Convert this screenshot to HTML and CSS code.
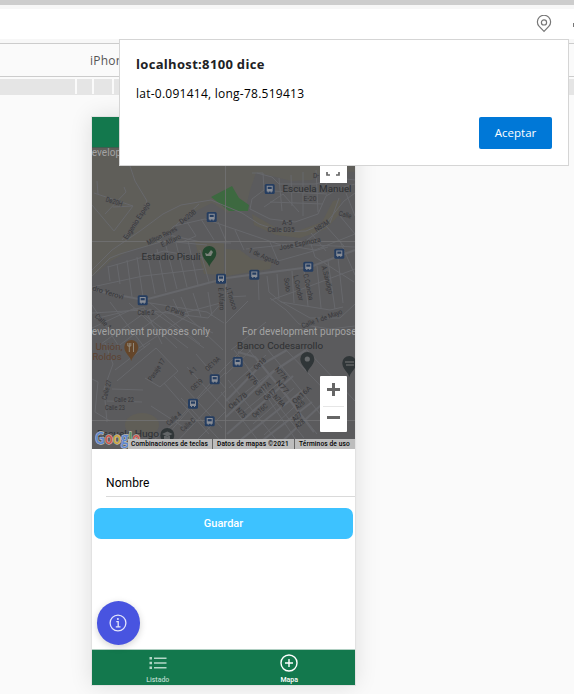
FILE: index.html
```html
<!DOCTYPE html>
<html lang="es">
<head>
<meta charset="utf-8">
<title>Mapa</title>
<link rel="stylesheet" href="styles.css">
</head>
<body>
<div class="tabstrip"></div>
<div class="addressbar">
  <svg class="pin" viewBox="0 0 16 18" width="16" height="18"><path d="M8 16.3 3.2 11.4a6.6 6.6 0 1 1 9.6 0Z"/><circle cx="8" cy="7.4" r="2.6"/></svg>
  <span class="more"></span>
</div>
<div class="device-bar"><span>iPhone X</span></div>
<div class="ruler"><i></i><i></i><i></i></div>
<main class="phone">
  <header class="app-header"></header>
  <div class="map">
  <svg class="map-canvas" viewBox="92 148 263 301" width="263" height="301">
    <defs>
      <g id="bus"><rect x="-5" y="-5" width="10" height="10" rx="1.5" fill="#253d60"/><path d="M-3-3.2h6v5.6h-1v1h-1v-1h-2v1h-1v-1h-1z" fill="#8a8e96"/><path d="M-2-2.2h4v2.2h-4z" fill="#253d60"/></g>
      <g id="place"><path d="M0 13C-1 8-7 5-7-1a7 7 0 0 1 14 0C7 5 1 8 0 13Z"/></g>
    </defs>
    <rect x="92" y="148" width="263" height="301" fill="#5b5b5d"/>
    <path d="M92 148H355V172L322 171 312 180 291 181 272 176 256 173 250 190 247 203 228 213 212 203 190 214 172 228 160 241 150 246 130 250 111 261 92 277Z" fill="#5f5e59"/>
    <path d="M225 249 240 250 252 259 272 262 270 269 226 276ZM252 214 278 229 295 232 322 222 333 201 341 199 338 216 326 229 300 238 276 235 254 225ZM195 242 224 243 224 275 204 274Z" fill="#605e56"/>
    <ellipse cx="142" cy="425" rx="17" ry="12" fill="#605e57"/>
    <path d="M211 197 232 186 239 198 249 205 248 211 229 211Z" fill="#3d6940"/>
    <g class="roads">
      <path d="M130 166 135 181 147 201 139 218 122 240M92 205 114 231 133 206 94 193M97 181 98 194M124 187 126 192 105 214M113 207 133 206"/>
      <path d="M92 270 112 250 140 231 163 214 181 205 211 200 242 213 259 224 283 232 306 231 327 222 344 201 355 193"/>
      <path d="M160 240 174 226 205 219 237 230 278 244 315 250 355 234M175 226 199 204M187 222 196 236 182 242M201 219 214 240M218 222 226 241M235 230 244 250M169 235 201 242 231 243"/>
      <path d="M252 173 263 173 264 190 252 199 250 209 270 219 295 222 318 214 326 196 340 188 355 184M257 173 272 177 279 184 315 184 338 178 355 180M279 178 282 211M291 175 292 206M303 172 303 216M316 170 318 212M331 170 323 193M272 191 327 194M270 202 323 204M264 207 283 194 299 212M339 198 330 223 307 240M346 193 355 216M311 233 326 251M326 226 344 246M340 216 355 234"/>
      <path d="M92 276 110 258 120 254 164 241 207 245M108 266 110 281M117 264 120 284M127 260 132 297M137 257 143 297M147 253 155 294M157 249 166 292M166 246 177 289M176 243 187 287M188 241 198 285M200 250 209 282M108 267 164 251 203 258M92 287 143 276 204 269"/>
      <path class="avenue" d="M92 290 144 300 227 278 310 267 355 250"/>
      <path d="M92 313 143 310 208 318 224 300M144 302 207 312 224 323M94 319 144 307 162 344M92 328 135 308 188 348M101 344 150 309 204 348M117 347 166 311 213 333M139 348 187 316 223 350M92 305 120 348M110 302 145 348M129 303 177 348M150 303 200 344M173 299 180 314 224 302M208 292 212 316M181 297 189 316M193 293 201 317"/>
      <path d="M226 280 228 297 246 296M258 275 259 300M267 276 269 292 281 302 330 310 343 307M277 274 279 299M292 271 294 303M304 270 308 306M317 266 321 308M328 261 335 309M338 258 343 303M271 300 302 289 355 269M280 301 310 318 340 318 355 304M270 298 286 310 299 324 330 329 355 326M225 324 248 301M231 350 266 322M246 249 293 244 355 247M270 242 278 261 328 247M310 241 315 257 354 282M340 241 355 275"/>
      <path d="M92 379 98 382 95 412 110 421M105 343 113 364 104 389 107 422M115 370 150 343M117 381 156 348 178 371 160 387 145 378M112 389 143 390M107 401 142 402M144 448 177 421 222 370 247 345M156 448 200 397 226 372M171 448 226 390M189 448 226 411M174 376 222 428M164 383 209 434M187 367 226 410M196 354 226 389M151 406 188 430M181 398 227 448"/>
      <path class="avenue" d="M238 352 255 357 282 390 314 432M226 401 261 365 287 350M226 417 274 371 306 350M227 434 293 376M238 442 303 390M254 447 312 402M276 447 321 405"/>
      <path d="M226 374 251 350M229 388 266 355M234 401 274 370M243 412 286 377M253 424 294 388M264 435 304 398M234 350 304 438M249 350 317 434M268 350 330 426M286 350 340 406M304 347 355 401M221 392 260 443M228 380 278 442M247 367 296 440"/>
    </g>
    <path d="M92 241.5H355M92 420.5H355M225.5 148V449" stroke="#727273" stroke-width=".8"/>
    <g class="labels" id="labels"></g>
    <use href="#bus" x="211.7" y="217"/><use href="#bus" x="269.7" y="189"/><use href="#bus" x="142.7" y="300.3"/><use href="#bus" x="221" y="278.7"/><use href="#bus" x="254.3" y="274.7"/><use href="#bus" x="308.3" y="266.7"/><use href="#bus" x="339.3" y="253.7"/><use href="#bus" x="214.7" y="379.3"/><use href="#bus" x="193" y="403.7"/><use href="#bus" x="209.7" y="421.3"/><use href="#bus" x="237.7" y="362"/>
    <use href="#place" x="209.3" y="254" fill="#24482f"/><path d="M205 253l3 1 3-4 2 2-2 4h-5z" fill="#7b827b"/>
    <use href="#place" x="131.3" y="348" fill="#65462a"/><path d="M129.3 343v4M127.8 343v3h3v-3M129.3 346v6M133.5 343v9" stroke="#8f8678" fill="none"/>
    <use href="#place" x="307.3" y="360" fill="#303638"/><circle cx="307.3" cy="359" r="2.6" fill="#66696b"/>
    <use href="#place" x="349.3" y="364" fill="#303638"/><path d="M345 362h9M346 365h8" stroke="#777"/>
    <use href="#place" x="167.3" y="436" fill="#303638"/><path d="M162 434l5.300-2.500 5.300 2.500-5.300 2.500zM164 436v3h6v-3" fill="#626567"/>
    <g class="notice">
      <text x="86" y="155.500" textLength="124">development purposes only</text>
      <text x="86" y="334.500" textLength="124">development purposes only</text>
      <text x="242" y="334.500" textLength="141">For development purposes only</text>
    </g>
    <text class="google" x="95" y="443.500" textLength="45" lengthAdjust="spacingAndGlyphs"><tspan fill="#5c86cf">G</tspan><tspan fill="#d0564c">o</tspan><tspan fill="#cda63c">o</tspan><tspan fill="#5c86cf">g</tspan><tspan fill="#56955e">l</tspan><tspan fill="#d0564c">e</tspan></text>
  </svg>
  <div class="fullscreen"><svg width="14" height="14" viewBox="0 0 14 14"><path d="M1 4V1h3M10 1h3v3M13 10v3h-3M4 13H1v-3"/></svg></div>
  <div class="zoom"><span class="plus"></span><hr><span class="minus"></span></div>
  <div class="credits"><span>Combinaciones de teclas</span><span>Datos de mapas ©2021</span><span>Términos de uso</span></div>
  </div>
  <section class="content">
    <div class="field">Nombre</div>
    <div class="save">Guardar</div>
    <div class="fab"><svg viewBox="0 0 18 18" width="18" height="18"><circle cx="9" cy="9" r="7.900"/><path d="M7.300 7.600H9.200V12.700M6.800 12.800H11.500"/><circle class="dot" cx="8.900" cy="4.900" r="1"/></svg></div>
  </section>
  <nav class="tabs">
    <div class="tab muted"><svg viewBox="0 0 18 18" width="18" height="18"><path d="M5 4.200h12.500M5 9h12.500M5 13.800h12.500"/><path class="bullets" d="M.5 4.200h2.500M.5 9h2.500M.5 13.800h2.500"/></svg><span>Listado</span></div>
    <div class="tab"><svg viewBox="0 0 18 18" width="18" height="18"><circle cx="9" cy="9" r="8"/><path d="M9 5v8M5 9h8"/></svg><span>Mapa</span></div>
  </nav>
</main>
<div class="dialog">
  <h1>localhost:8100 dice</h1>
  <p>lat-0.091414, long-78.519413</p>
  <button>Aceptar</button>
</div>
<script src="map.js"></script>
</body>
</html>
```
FILE: styles.css
```css
* { box-sizing: border-box; }
body { margin: 0; width: 574px; height: 694px; overflow: hidden; position: relative; background: #fafafa; font-family: "Open Sans", "Noto Sans", sans-serif; }
.tabstrip { height: 9px; background: #f7f7f7; border-top: 5px solid #cdcdcd; }
.addressbar { height: 30px; background: #fff; display: flex; justify-content: flex-end; padding-top: 6px; gap: 21px; }
.pin { fill: none; stroke: #767676; stroke-width: 1.2; }
.more { width: 1px; height: 4px; margin-top: 8px; background: #777; }
.device-bar { height: 38px; border-top: 4px solid #f7f7f7; border-bottom: 1px solid #ccc; box-shadow: inset 0 1px #ccc; padding: 9px 0 0 90px; font-size: 12px; line-height: 18px; color: #555; letter-spacing: .2px; }
.ruler { height: 16px; margin-top: 2px; background: #e5e5e5; display: flex; padding-left: 75px; }
.ruler i { width: 2px; height: 15px; background: #fafafa; margin-right: 15px; }
.ruler i + i { margin-right: 18px; }
.phone { width: 263px; height: 568px; margin: 22px 0 0 92px; background: #fff; display: flex; flex-direction: column; box-shadow: 0 0 0 1px #e2e2e2, 0 0 22px rgba(0,0,0,.12); }
.app-header { height: 31px; background: #13784d; border-bottom: 1px solid #3f5d50; }
.map { height: 301px; position: relative; overflow: hidden; }
.map-canvas { display: block; }
.roads { fill: none; stroke: #67686c; stroke-width: 1; stroke-linejoin: round; }
.roads .avenue { stroke-width: 2.2; stroke: #66676b; }
.labels { font-family: Roboto, sans-serif; font-size: 7px; fill: #37373a; text-anchor: middle; stroke: #5b5b5d; stroke-width: .7px; paint-order: stroke; }
.labels .big { font-size: 9.5px; fill: #2e3032; }
.labels .food { font-size: 9px; fill: #5d4231; }
.notice { font-family: Roboto, sans-serif; font-size: 10px; fill: #a3a3a3; }
.google { font-family: "Open Sans", sans-serif; font-size: 16px; font-weight: 600; stroke: #bbb; stroke-width: 1.3px; paint-order: stroke; }
.fullscreen { position: absolute; left: 228px; top: 7px; width: 27px; height: 28px; background: #fff; padding: 7px 6px; }
.fullscreen svg { display: block; fill: none; stroke: #666; stroke-width: 1.7; }
.zoom { position: absolute; left: 228px; top: 228px; width: 27px; height: 56px; background: #fff; display: flex; flex-direction: column; align-items: center; justify-content: space-between; padding: 7px 3px 13px; border-radius: 1px; }
.plus, .minus { width: 13px; height: 3px; background: #666; }
.plus { height: 13px; background: linear-gradient(#666,#666) center/3px 13px no-repeat, linear-gradient(#666,#666) center/13px 3px no-repeat; }
.zoom hr { width: 21px; height: 1px; border: 0; background: #e6e6e6; margin: 0; }
.credits { position: absolute; left: 36px; right: 0; bottom: 0; height: 10px; display: flex; background: #bdbdbd; font: 500 6.6px/10px Roboto, sans-serif; color: #000; white-space: nowrap; }
.credits span { padding-left: 3px; width: 84px; letter-spacing: .12px; }
.credits span + span { width: 82px; border-left: 1px solid #666; padding-left: 4px; }
.credits span:last-child { width: 61px; }
.content { height: 200px; position: relative; padding-top: 20px; }
.field { margin-left: 14px; height: 28px; border-bottom: 1px solid #dadada; font: 12px/28px Roboto, sans-serif; letter-spacing: .1px; color: #000; }
.save { height: 31px; margin: 11px 2px 0; border-radius: 7px; background: #3dc2ff; color: #fff; text-align: center; font: 500 11px/31px Roboto, sans-serif; }
.fab { position: absolute; left: 4.500px; bottom: 4.500px; width: 43.500px; height: 43.500px; border-radius: 50%; background: #4854e0; padding: 12.700px; box-shadow: 0 2px 7px rgba(0,0,0,.18); }
.fab svg { display: block; fill: none; stroke: #e4e6fb; stroke-width: 1.3; }
.fab .dot { fill: #e4e6fb; stroke: none; }
.tabs { height: 36px; background: #13784d; border-top: 1px solid #b0cfc2; display: flex; color: #fff; }
.tab { flex: 1; display: flex; flex-direction: column; align-items: center; padding-top: 4px; font: 500 7px/8px Roboto, sans-serif; gap: 4px; }
.tab svg { fill: none; stroke: #fff; stroke-width: 1.4; }
.tab .bullets { stroke-width: 2.5; }
.muted { color: #b5d8c9; }
.muted svg { stroke: #b5d8c9; }
.dialog { position: absolute; left: 119px; top: 39px; width: 450px; height: 127px; padding: 14px 16px; background: #fff; border: 1px solid #d5d5d5; display: flex; flex-direction: column; }
.dialog h1 { margin: 0; font-size: 13px; line-height: 20px; font-weight: 700; color: #202124; letter-spacing: .32px; }
.dialog p { margin: 10px 0 0; font-size: 12px; line-height: 20px; color: #000; letter-spacing: .25px; }
.dialog button { align-self: flex-end; margin-top: 13px; width: 73px; height: 32px; padding: 0; flex: none; border: 0; border-radius: 2px; background: #0078d7; color: #fff; font: 11.500px/32px "Open Sans", sans-serif; }
```
FILE: map.js
```javascript
// Street and place names: text, centre x, centre y, rotation, width, class
const labels = [
  ["De20H", 114, 202, 18, 17], ["Eugenio Espejo", 137, 221, -57, 43],
  ["De20B", 188, 217, -37, 19], ["Milton Reyes", 162, 236, -27, 33],
  ["E.Alfaro", 171, 241, -25, 21], ["D-", 316, 176, 0, 6],
  ["Escuela Manuel", 317, 189, 0, 69, "big"], ["E-20", 310, 199, 0, 13],
  ["Calle", 345, 215, 15, 13], ["A-5", 287, 223, 0, 10],
  ["Calle D35", 281, 230, 0, 27], ["N82M", 322, 226, -33, 16],
  ["Jose Espinoza", 300, 244, -12, 42], ["1 de Agosto", 264, 257, 24, 33],
  ["Estadio Pisuli", 171, 257, 0, 59, "big"], ["dro Yerovi", 108, 293, 17, 32],
  ["Calle 2", 146, 313, 0, 17], ["C Paris", 175, 311, 17, 20],
  ["E Alfaro", 221, 299, 86, 23], ["J.Tinoco", 231, 298, 72, 24],
  ["Soto", 287, 285, 82, 14], ["L.Condor", 298, 288, 77, 26],
  ["C.Concha", 308, 287, 78, 27], ["A.Sandigo", 327, 280, 76, 29],
  ["Calle 1 de Mayo", 322, 319, -20, 43], ["Calle 1", 103, 322, 43, 20],
  ["Unión,", 109, 347, 0, 27, "food"], ["Roldos", 107, 357, 0, 29, "food"],
  ["Pasaje 17", 157, 370, -57, 25], ["A 1", 193, 371, -40, 8],
  ["OE19A", 213, 364, -43, 18], ["OE19", 197, 385, -43, 14],
  ["Calle 27", 107, 390, -75, 20], ["Calle 22", 124, 400, 0, 20],
  ["Calle 23", 115, 408, 0, 20], ["Calle 4", 174, 419, -40, 17],
  ["Calle C", 188, 425, -40, 17], ["Escuela Hugo", 128, 434, 0, 62, "big"],
  ["Banco Codesarrollo", 280, 346, 0, 86, "big"], ["Oe18", 260, 364, -42, 14],
  ["N76", 252, 379, 48, 14], ["N77A", 281, 374, 48, 15],
  ["N77", 282, 387, 48, 15], ["Oe17A", 263, 389, -40, 18],
  ["Oe17", 270, 395, -40, 14], ["Oe17B", 238, 401, -40, 22],
  ["Oe16A", 302, 395, -42, 23], ["N76A", 279, 401, 48, 14],
  ["Oe16C", 260, 411, -40, 18], ["N75", 241, 413, 48, 11],
  ["A26", 300, 405, -40, 10], ["A27", 297, 417, -40, 10], ["A28", 300, 424, -40, 10]
];
const layer = document.getElementById("labels");
for (const [name, x, y, angle, width, kind] of labels) {
  const t = document.createElementNS("http://www.w3.org/2000/svg", "text");
  t.textContent = name;
  t.setAttribute("transform", `translate(${x} ${y}) rotate(${angle})`);
  t.setAttribute("y", kind ? 3 : 2);
  t.setAttribute("textLength", width);
  t.setAttribute("lengthAdjust", "spacingAndGlyphs");
  if (kind) t.setAttribute("class", kind);
  layer.appendChild(t);
}
```
